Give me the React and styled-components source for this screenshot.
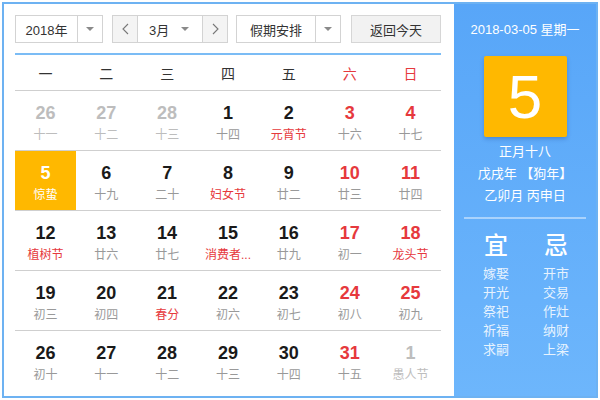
import React from "react";
import styled, { createGlobalStyle } from "styled-components";

const GlobalStyle = createGlobalStyle`
  html, body {
    margin: 0;
    padding: 0;
    background: #ffffff;
  }
  body {
    font-family: "Liberation Sans", "Noto Sans CJK SC", sans-serif;
  }
`;

const weekdays = [
  { t: "一" },
  { t: "二" },
  { t: "三" },
  { t: "四" },
  { t: "五" },
  { t: "六", red: true },
  { t: "日", red: true },
];

// n: number, l: lunar text, o: other month, rn: red number, rl: red lunar
const weeks = [
  [
    { n: 26, l: "十一", o: true },
    { n: 27, l: "十二", o: true },
    { n: 28, l: "十三", o: true },
    { n: 1, l: "十四" },
    { n: 2, l: "元宵节", rl: true },
    { n: 3, l: "十六", rn: true },
    { n: 4, l: "十七", rn: true },
  ],
  [
    { n: 5, l: "惊蛰", today: true },
    { n: 6, l: "十九" },
    { n: 7, l: "二十" },
    { n: 8, l: "妇女节", rl: true },
    { n: 9, l: "廿二" },
    { n: 10, l: "廿三", rn: true },
    { n: 11, l: "廿四", rn: true },
  ],
  [
    { n: 12, l: "植树节", rl: true },
    { n: 13, l: "廿六" },
    { n: 14, l: "廿七" },
    { n: 15, l: "消费者...", rl: true },
    { n: 16, l: "廿九" },
    { n: 17, l: "初一", rn: true },
    { n: 18, l: "龙头节", rn: true, rl: true },
  ],
  [
    { n: 19, l: "初三" },
    { n: 20, l: "初四" },
    { n: 21, l: "春分", rl: true },
    { n: 22, l: "初六" },
    { n: 23, l: "初七" },
    { n: 24, l: "初八", rn: true },
    { n: 25, l: "初九", rn: true },
  ],
  [
    { n: 26, l: "初十" },
    { n: 27, l: "十一" },
    { n: 28, l: "十二" },
    { n: 29, l: "十三" },
    { n: 30, l: "十四" },
    { n: 31, l: "十五", rn: true },
    { n: 1, l: "愚人节", o: true },
  ],
];

const yi = ["嫁娶", "开光", "祭祀", "祈福", "求嗣"];
const ji = ["开市", "交易", "作灶", "纳财", "上梁"];

const Chevron = ({ dir }) => (
  <svg width="7" height="12" viewBox="0 0 7 12">
    <polyline
      points={dir === "left" ? "6,1 1,6 6,11" : "1,1 6,6 1,11"}
      fill="none"
      stroke="#777"
      strokeWidth="1.1"
    />
  </svg>
);

const App = () => {
  return (
    <>
      <GlobalStyle />
      <Frame>
        <Main>
          <Toolbar>
            <Select width="88px" labelWidth="62px">
              <SelectLabel>2018年</SelectLabel>
              <ArrowBox>
                <Caret />
              </ArrowBox>
            </Select>
            <MonthGroup>
              <NavBtn>
                <Chevron dir="left" />
              </NavBtn>
              <MonthSelect>
                <span>3月</span>
                <Caret />
              </MonthSelect>
              <NavBtn>
                <Chevron dir="right" />
              </NavBtn>
            </MonthGroup>
            <Select width="105px" labelWidth="79px">
              <SelectLabel>假期安排</SelectLabel>
              <ArrowBox>
                <Caret />
              </ArrowBox>
            </Select>
            <TodayBtn>返回今天</TodayBtn>
          </Toolbar>
          <BlueLine />
          <WeekHead>
            {weekdays.map((w) => (
              <WeekCell key={w.t} red={w.red}>
                {w.t}
              </WeekCell>
            ))}
          </WeekHead>
          {weeks.map((week, i) => (
            <WeekRow key={i} last={i === weeks.length - 1}>
              {week.map((d, j) => (
                <DayCell key={j} today={d.today}>
                  <DayNum tone={d.today ? "today" : d.o ? "other" : d.rn ? "red" : "normal"}>
                    {d.n}
                  </DayNum>
                  <Lunar tone={d.today ? "today" : d.o ? "other" : d.rl ? "red" : "normal"}>
                    {d.l}
                  </Lunar>
                </DayCell>
              ))}
            </WeekRow>
          ))}
        </Main>
        <Side>
          <DateLine>2018-03-05 星期一</DateLine>
          <BigDay>5</BigDay>
          <LunarInfo>
            <div>正月十八</div>
            <div>戊戌年 【狗年】</div>
            <div>乙卯月 丙申日</div>
          </LunarInfo>
          <SideDivider />
          <Almanac>
            <AlmanacCol>
              <AlmanacHead>宜</AlmanacHead>
              {yi.map((t) => (
                <AlmanacItem key={t}>{t}</AlmanacItem>
              ))}
            </AlmanacCol>
            <AlmanacCol>
              <AlmanacHead>忌</AlmanacHead>
              {ji.map((t) => (
                <AlmanacItem key={t}>{t}</AlmanacItem>
              ))}
            </AlmanacCol>
          </Almanac>
        </Side>
      </Frame>
    </>
  );
};

const Frame = styled.div`
  box-sizing: border-box;
  margin: 2px;
  width: 596px;
  height: 396px;
  border: 2px solid #6db2f2;
  display: flex;
  overflow: hidden;
`;

const Main = styled.div`
  width: 450px;
  padding: 11px 13px 0 11px;
  box-sizing: border-box;
  background: #fff;
`;

const Toolbar = styled.div`
  display: flex;
  height: 28px;
  font-size: 13px;
  color: #333;
`;

const Select = styled.div`
  box-sizing: border-box;
  width: ${(p) => p.width};
  height: 28px;
  border: 1px solid #d3d3d3;
  display: flex;
  margin-right: ${(p) => (p.width === "88px" ? "9px" : "10px")};
  background: #fff;
  & > span:first-child {
    width: ${(p) => p.labelWidth};
  }
`;

const SelectLabel = styled.span`
  display: flex;
  align-items: center;
  justify-content: center;
  border-right: 1px solid #d3d3d3;
  box-sizing: border-box;
`;

const ArrowBox = styled.span`
  flex: 1;
  display: flex;
  align-items: center;
  justify-content: center;
`;

const Caret = styled.i`
  display: inline-block;
  width: 0;
  height: 0;
  border-left: 4px solid transparent;
  border-right: 4px solid transparent;
  border-top: 4px solid #8a8a8a;
`;

const MonthGroup = styled.div`
  box-sizing: border-box;
  width: 116px;
  height: 28px;
  border: 1px solid #d3d3d3;
  display: flex;
  margin-right: 8px;
`;

const NavBtn = styled.span`
  width: 24px;
  background: #f4f4f4;
  display: flex;
  align-items: center;
  justify-content: center;
`;

const MonthSelect = styled.span`
  flex: 1;
  border-left: 1px solid #d3d3d3;
  border-right: 1px solid #d3d3d3;
  background: #fff;
  display: flex;
  align-items: center;
  justify-content: space-between;
  padding: 0 13px 0 11px;
`;

const TodayBtn = styled.div`
  box-sizing: border-box;
  width: 90px;
  height: 28px;
  border: 1px solid #d6d6d6;
  background: #f2f2f2;
  display: flex;
  align-items: center;
  justify-content: center;
  margin-left: auto;
`;

const BlueLine = styled.div`
  margin-top: 10px;
  height: 2px;
  background: #7bbcf5;
`;

const WeekHead = styled.div`
  display: grid;
  grid-template-columns: repeat(7, 1fr);
  height: 35px;
  border-bottom: 1px solid #cfcfcf;
`;

const WeekCell = styled.div`
  display: flex;
  align-items: center;
  justify-content: center;
  font-size: 14px;
  color: ${(p) => (p.red ? "#e6393d" : "#333")};
`;

const WeekRow = styled.div`
  display: grid;
  grid-template-columns: repeat(7, 1fr);
  height: 59px;
  border-bottom: ${(p) => (p.last ? "none" : "1px solid #cfcfcf")};
`;

const DayCell = styled.div`
  display: flex;
  flex-direction: column;
  align-items: center;
  padding-top: 12px;
  box-sizing: border-box;
  background: ${(p) => (p.today ? "#ffb800" : "transparent")};
`;

const numColors = {
  today: "#fff",
  other: "#bdbdbd",
  red: "#e6393d",
  normal: "#1a1a1a",
};

const lunarColors = {
  today: "#fff",
  other: "#bdbdbd",
  red: "#e6393d",
  normal: "#999",
};

const DayNum = styled.div`
  font-size: 18px;
  font-weight: bold;
  line-height: 20px;
  color: ${(p) => numColors[p.tone]};
`;

const Lunar = styled.div`
  font-size: 12px;
  line-height: 16px;
  margin-top: 4px;
  color: ${(p) => lunarColors[p.tone]};
`;

const Side = styled.div`
  flex: 1;
  background: linear-gradient(180deg, #58a6f8 0%, #6db6fc 100%);
  color: #fff;
  display: flex;
  flex-direction: column;
  align-items: center;
  padding-top: 16px;
`;

const DateLine = styled.div`
  font-size: 13px;
  line-height: 20px;
`;

const BigDay = styled.div`
  margin-top: 16px;
  width: 83px;
  height: 81px;
  background: #ffb800;
  border-radius: 2px;
  box-shadow: 0 2px 4px rgba(0, 40, 120, 0.25);
  display: flex;
  align-items: center;
  justify-content: center;
  font-size: 62px;
  font-family: "Liberation Sans", sans-serif;
  line-height: 1;
`;

const LunarInfo = styled.div`
  margin-top: 4px;
  font-size: 13px;
  line-height: 22px;
  text-align: center;
`;

const SideDivider = styled.div`
  margin-top: 10px;
  width: 122px;
  height: 2px;
  background: rgba(255, 255, 255, 0.45);
`;

const Almanac = styled.div`
  display: grid;
  grid-template-columns: 50px 50px;
  column-gap: 10px;
  margin-top: 13px;
  margin-left: 2px;
`;

const AlmanacCol = styled.div`
  display: flex;
  flex-direction: column;
  align-items: center;
`;

const AlmanacHead = styled.div`
  font-size: 24px;
  line-height: 28px;
  font-weight: 500;
  margin-bottom: 4px;
`;

const AlmanacItem = styled.div`
  font-size: 13px;
  line-height: 19px;
  color: rgba(255, 255, 255, 0.86);
`;

export default App;
